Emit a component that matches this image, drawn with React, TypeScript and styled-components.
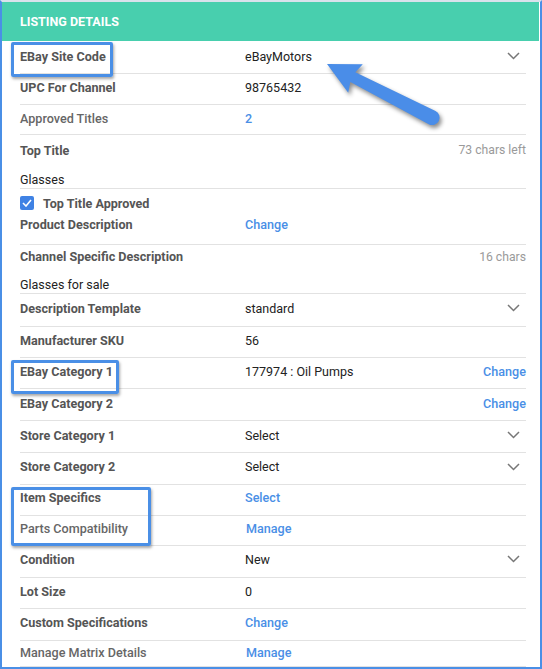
import React from 'react';
import styled, { createGlobalStyle } from 'styled-components';

const GlobalStyle = createGlobalStyle`
  html, body {
    margin: 0;
    padding: 0;
    background: #ffffff;
  }
  body {
    font-family: Roboto, "Liberation Sans", Arial, sans-serif;
  }
`;

const Frame = styled.div`
  position: relative;
  width: 542px;
  height: 669px;
  box-sizing: border-box;
  border: 2px solid #4a8fe6;
  border-top-color: #d9e2ec;
  padding-right: 1px;
  overflow: hidden;
  background: #fff;
`;

const Header = styled.div`
  height: 39px;
  background: #48cfae;
  display: flex;
  align-items: center;
  padding-left: 18px;
  color: #ffffff;
  font-size: 12.5px;
  font-weight: 700;
  text-transform: uppercase;
`;

const Body = styled.div`
  padding: 0 13px 0 18px;
`;

const Row = styled.div<{ $h: number; $lift?: number; $line?: boolean }>`
  box-sizing: border-box;
  height: ${(p) => p.$h}px;
  display: grid;
  grid-template-columns: 225px 1fr auto;
  align-items: center;
  padding-bottom: ${(p) => (p.$lift === undefined ? 3 : p.$lift)}px;
  border-bottom: ${(p) => (p.$line === false ? 'none' : '1px solid #e2e2e2')};
`;

const Label = styled.span<{ $light?: boolean }>`
  font-size: 12.6px;
  font-weight: ${(p) => (p.$light ? 500 : 700)};
  color: ${(p) => (p.$light ? '#666666' : '#555555')};
  white-space: nowrap;
`;

const Value = styled.span`
  font-size: 12.5px;
  color: #222222;
  white-space: nowrap;
`;

const Link = styled.span<{ $nudge?: number }>`
  font-size: 12.6px;
  font-weight: 500;
  color: #4a8fe6;
  white-space: nowrap;
  margin-left: ${(p) => p.$nudge || 0}px;
`;

const Hint = styled.span`
  font-size: 12.2px;
  color: #9a9a9a;
  white-space: nowrap;
`;

const InputLine = styled.div<{ $h: number }>`
  box-sizing: border-box;
  height: ${(p) => p.$h}px;
  display: flex;
  align-items: flex-end;
  padding-bottom: 1px;
  border-bottom: 1px solid #e2e2e2;
  font-size: 12.5px;
  color: #222222;
`;

const CheckRow = styled.div`
  height: 24px;
  display: flex;
  align-items: flex-end;
  gap: 9px;
  padding-bottom: 2px;
  box-sizing: border-box;
`;

const CheckBox = styled.span`
  width: 14px;
  height: 14px;
  border-radius: 2px;
  background: #3f82e4;
  display: inline-flex;
  align-items: center;
  justify-content: center;
  margin-bottom: 1px;
`;

const ChevronWrap = styled.span`
  display: inline-flex;
  margin-right: 6px;
`;

const Highlight = styled.div<{ $x: number; $y: number; $w: number; $h: number }>`
  position: absolute;
  left: ${(p) => p.$x}px;
  top: ${(p) => p.$y}px;
  width: ${(p) => p.$w}px;
  height: ${(p) => p.$h}px;
  box-sizing: border-box;
  border: 3px solid #4a8fe6;
  border-radius: 2px;
  box-shadow: 1px 2px 3px rgba(0, 0, 0, 0.35);
  pointer-events: none;
`;

const ArrowLayer = styled.svg`
  position: absolute;
  left: -2px;
  top: -2px;
  width: 542px;
  height: 669px;
  pointer-events: none;
  filter: drop-shadow(2px 3px 2px rgba(0, 0, 0, 0.45));
`;

const Chevron = () => (
  <ChevronWrap>
    <svg width="13" height="8" viewBox="0 0 13 8">
      <polyline points="1,1 6.5,6.5 12,1" fill="none" stroke="#777" strokeWidth="1.5" />
    </svg>
  </ChevronWrap>
);

const App: React.FC = () => {
  return (
    <>
      <GlobalStyle />
      <Frame>
        <Header>Listing Details</Header>
        <Body>
          <Row $h={33} $lift={2}>
            <Label>EBay Site Code</Label>
            <Value>eBayMotors</Value>
            <Chevron />
          </Row>
          <Row $h={31}>
            <Label>UPC For Channel</Label>
            <Value>98765432</Value>
          </Row>
          <Row $h={30}>
            <Label $light>Approved Titles</Label>
            <Link>2</Link>
          </Row>

          <Row $h={30} $line={false} $lift={0}>
            <Label>Top Title</Label>
            <span />
            <Hint>73 chars left</Hint>
          </Row>
          <InputLine $h={24}>Glasses</InputLine>
          <CheckRow>
            <CheckBox>
              <svg width="10" height="8" viewBox="0 0 10 8">
                <polyline points="1,4 4,7 9,1" fill="none" stroke="#fff" strokeWidth="1.6" />
              </svg>
            </CheckBox>
            <Label>Top Title Approved</Label>
          </CheckRow>
          <Row $h={32} $lift={8}>
            <Label>Product Description</Label>
            <Link>Change</Link>
          </Row>

          <Row $h={25} $line={false} $lift={2}>
            <Label>Channel Specific Description</Label>
            <span />
            <Hint>16 chars</Hint>
          </Row>
          <InputLine $h={24}>Glasses for sale</InputLine>

          <Row $h={33} $lift={4}>
            <Label>Description Template</Label>
            <Value>standard</Value>
            <Chevron />
          </Row>
          <Row $h={31} $lift={4}>
            <Label>Manufacturer SKU</Label>
            <Value>56</Value>
          </Row>
          <Row $h={31}>
            <Label>EBay Category 1</Label>
            <Value>177974 : Oil Pumps</Value>
            <Link>Change</Link>
          </Row>
          <Row $h={32}>
            <Label>EBay Category 2</Label>
            <span />
            <Link>Change</Link>
          </Row>
          <Row $h={32}>
            <Label>Store Category 1</Label>
            <Value>Select</Value>
            <Chevron />
          </Row>
          <Row $h={32} $lift={4}>
            <Label>Store Category 2</Label>
            <Value>Select</Value>
            <Chevron />
          </Row>
          <Row $h={31} $lift={5}>
            <Label>Item Specifics</Label>
            <Link>Select</Link>
          </Row>
          <Row $h={30} $lift={5}>
            <Label $light>Parts Compatibility</Label>
            <Link $nudge={1}>Manage</Link>
          </Row>
          <Row $h={32} $lift={5}>
            <Label>Condition</Label>
            <Value>New</Value>
            <Chevron />
          </Row>
          <Row $h={31} $lift={4}>
            <Label>Lot Size</Label>
            <Value>0</Value>
          </Row>
          <Row $h={32} $lift={5}>
            <Label>Custom Specifications</Label>
            <Link>Change</Link>
          </Row>
          <Row $h={26} $lift={2}>
            <Label $light>Manage Matrix Details</Label>
            <Link $nudge={1}>Manage</Link>
          </Row>
        </Body>

        <Highlight $x={9} $y={40} $w={102} $h={35} />
        <Highlight $x={9} $y={358} $w={108} $h={34} />
        <Highlight $x={9} $y={485} $w={140} $h={59} />

        <ArrowLayer viewBox="0 0 542 669">
          <g transform="translate(327 64) rotate(27)">
            <path
              d="M0 0 L32 -16 L29 -5.5 L118 -7.5 A7.5 7.5 0 0 1 118 7.5 L29 5.5 L32 16 Z"
              fill="#4a8de8"
            />
          </g>
        </ArrowLayer>
      </Frame>
    </>
  );
};

export default App;
